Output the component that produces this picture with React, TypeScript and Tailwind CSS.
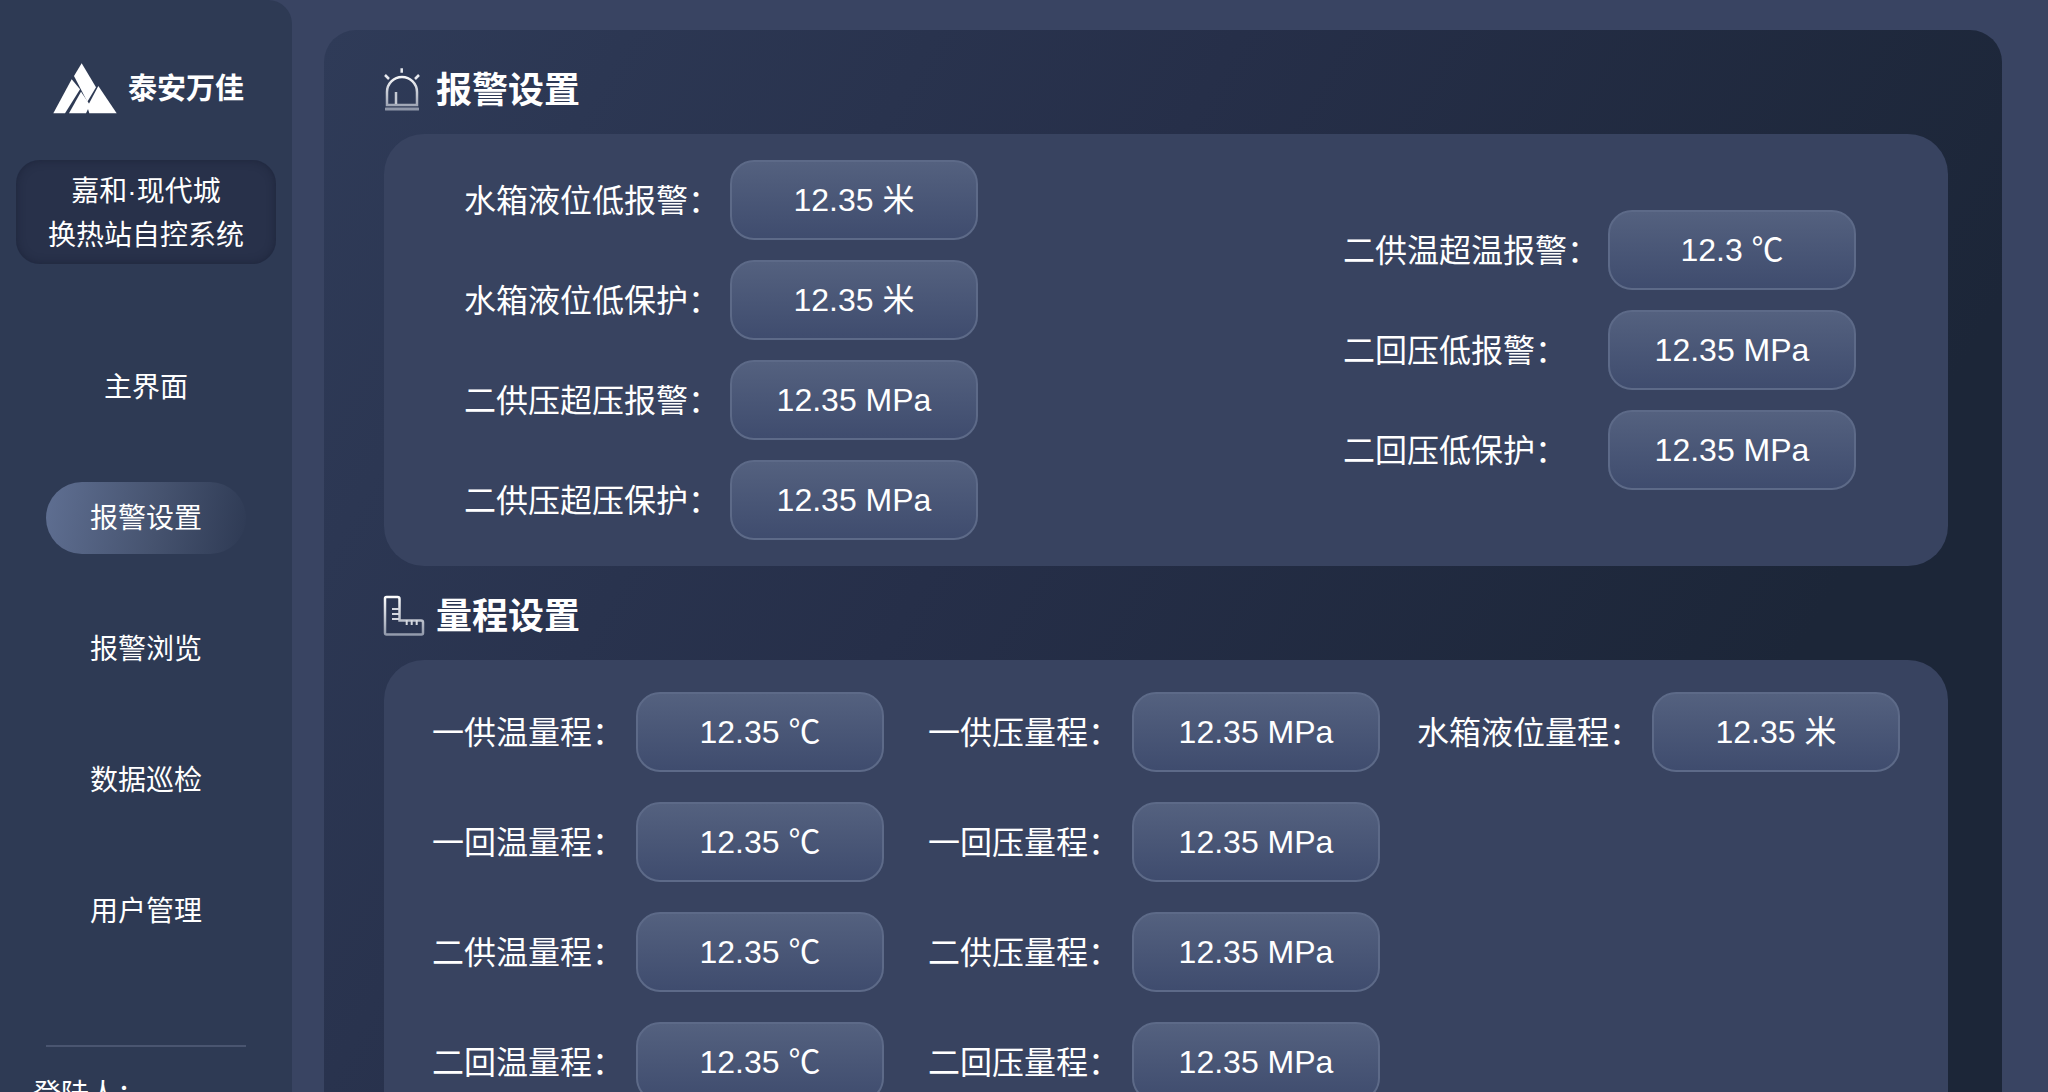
const font = "font-['Liberation_Sans','Noto_Sans_CJK_SC',sans-serif]";

const navItems = ["主界面", "报警设置", "报警浏览", "数据巡检", "用户管理"];

const alarmLeft = [
  { label: "水箱液位低报警：", value: "12.35 米" },
  { label: "水箱液位低保护：", value: "12.35 米" },
  { label: "二供压超压报警：", value: "12.35 MPa" },
  { label: "二供压超压保护：", value: "12.35 MPa" },
];

const alarmRight = [
  { label: "二供温超温报警：", value: "12.3 ℃" },
  { label: "二回压低报警：", value: "12.35 MPa" },
  { label: "二回压低保护：", value: "12.35 MPa" },
];

const rangeCol1 = [
  { label: "一供温量程：", value: "12.35 ℃" },
  { label: "一回温量程：", value: "12.35 ℃" },
  { label: "二供温量程：", value: "12.35 ℃" },
  { label: "二回温量程：", value: "12.35 ℃" },
];

const rangeCol2 = [
  { label: "一供压量程：", value: "12.35 MPa" },
  { label: "一回压量程：", value: "12.35 MPa" },
  { label: "二供压量程：", value: "12.35 MPa" },
  { label: "二回压量程：", value: "12.35 MPa" },
];

function Logo() {
  return (
    <svg width="80" height="65" viewBox="0 0 240 195" fill="#fff" className="shrink-0">
      <polygon points="110,25 153,97 127,140 87,63" />
      <polygon points="80,73 25,175 60,175 105,103" />
      <polygon points="108,110 135,150 123,175 72,175" />
      <polygon points="160,93 215,175 133,175 127,155" />
    </svg>
  );
}

function AlarmIcon() {
  return (
    <svg width="50" height="55" viewBox="0 0 50 55" fill="none" className="-ml-1 mb-[5px] shrink-0">
      <defs>
        <linearGradient id="alarmFill" gradientUnits="userSpaceOnUse" x1="0" y1="14" x2="0" y2="51">
          <stop offset="0" stopColor="#ffffff" />
          <stop offset="1" stopColor="#8f97a9" />
        </linearGradient>
      </defs>
      <path d="M7 45V32a15 15 0 0 1 30 0v13z" stroke="url(#alarmFill)" strokeWidth="2.500" />
      <path d="M16 44V32" stroke="#c5c9d3" strokeWidth="2.500" />
      <rect x="5" y="47.500" width="34" height="3" rx="0.500" fill="#8f97a9" />
      <path d="M21.700 8.300v4.400M5 15l4 4M39 15l-4 4" stroke="#e8eaef" strokeWidth="2.500" />
    </svg>
  );
}

function RulerIcon() {
  return (
    <svg width="50" height="50" viewBox="0 0 50 50" fill="none" className="-ml-1 mb-[2px] shrink-0">
      <defs>
        <linearGradient id="rulerFill" gradientUnits="userSpaceOnUse" x1="0" y1="6" x2="0" y2="46">
          <stop offset="0" stopColor="#ffffff" />
          <stop offset="1" stopColor="#8f97a9" />
        </linearGradient>
      </defs>
      <path
        d="M6.500 7h11a2 2 0 0 1 2 2v21.500H41a2 2 0 0 1 2 2V43a1.500 1.500 0 0 1-1.500 1.500H6.500A1.500 1.500 0 0 1 5 43V8.500A1.500 1.500 0 0 1 6.500 7z"
        stroke="url(#rulerFill)"
        strokeWidth="2.500"
      />
      <path d="M12 19h7M12 24h7M12 29h7M26.700 30v5M31.700 30v5M36.700 30v5" stroke="#d5d8df" strokeWidth="2" />
    </svg>
  );
}

function Field({ label, value, labelWidth }: { label: string; value: string; labelWidth: string }) {
  return (
    <div className="flex items-center">
      <div className={`${labelWidth} shrink-0 pt-[2px] text-[32px] leading-none whitespace-nowrap text-white`}>{label}</div>
      <div className="flex h-20 w-[248px] items-center justify-center rounded-[24px] border-2 border-[#5d6a88] bg-gradient-to-b from-[#54617f] to-[#3f4c6e] text-[32px] text-white">
        {value}
      </div>
    </div>
  );
}

function SectionTitle({ icon, title, className }: { icon: React.ReactNode; title: string; className: string }) {
  return (
    <div className={`flex h-11 items-center ${className}`}>
      <div className="flex w-[52px] items-center justify-start">{icon}</div>
      <h2 className="pt-[2px] text-[36px] font-bold leading-none text-white">{title}</h2>
    </div>
  );
}

export default function App() {
  return (
    <div className={`flex h-[1092px] w-[2048px] overflow-hidden bg-[#394462] ${font}`}>
      <aside className="flex h-[1200px] w-[292px] shrink-0 flex-col items-center rounded-tr-[24px] bg-[#2e3a54]">
        <div className="mt-[55px] flex h-[65px] w-full shrink-0 items-center gap-[3px] pl-[45px]">
          <Logo />
          <span className="pt-[4px] text-[29px] font-bold text-white">泰安万佳</span>
        </div>
        <div className="mt-10 flex h-[104px] w-[260px] shrink-0 flex-col items-center justify-center rounded-[24px] bg-[#28314a] pt-[3px] text-[28px] leading-[44px] text-white shadow-[inset_0_0_8px_rgba(20,26,44,0.5)]">
          <div>嘉和·现代城</div>
          <div>换热站自控系统</div>
        </div>
        <nav className="mt-[87px] flex w-[200px] shrink-0 flex-col gap-[59px]">
          {navItems.map((item, i) => (
            <div
              key={item}
              className={`flex h-[72px] items-center justify-center rounded-[36px] pt-[2px] text-[28px] text-white ${
                i === 1 ? "bg-[linear-gradient(100deg,#5f6f92_0%,#46536f_55%,#2e3a54_100%)]" : ""
              }`}
            >
              {item}
            </div>
          ))}
        </nav>
        <div className="mt-[98px] h-0.5 w-[200px] shrink-0 bg-[#4a5570]" />
        <div className="mt-[28px] w-full shrink-0 pl-[33px] text-[28px] leading-[40px] text-white">登陆人：</div>
      </aside>

      <main className="ml-8 mt-[30px] mr-[46px] flex-1 rounded-t-[32px] bg-[linear-gradient(120deg,#2f3b58_0%,#262f49_40%,#1c2638_80%)] pl-[60px] pr-[54px] pt-[38px]">
        <SectionTitle icon={<AlarmIcon />} title="报警设置" className="mb-[22px]" />
        <section className="flex h-[432px] items-center justify-between rounded-[40px] bg-[#384360] pl-[80px] pr-[92px]">
          <div className="flex flex-col gap-5">
            {alarmLeft.map((f) => (
              <Field key={f.label} {...f} labelWidth="w-[266px]" />
            ))}
          </div>
          <div className="flex flex-col gap-5">
            {alarmRight.map((f) => (
              <Field key={f.label} {...f} labelWidth="w-[265px]" />
            ))}
          </div>
        </section>

        <SectionTitle icon={<RulerIcon />} title="量程设置" className="mt-7 mb-[22px]" />
        <section className="flex h-[500px] gap-[44px] rounded-[40px] bg-[#384360] pl-12 pt-8">
          <div className="flex flex-col gap-[30px]">
            {rangeCol1.map((f) => (
              <Field key={f.label} {...f} labelWidth="w-[204px]" />
            ))}
          </div>
          <div className="flex flex-col gap-[30px]">
            {rangeCol2.map((f) => (
              <Field key={f.label} {...f} labelWidth="w-[204px]" />
            ))}
          </div>
          <div className="-ml-[7px]">
            <Field label="水箱液位量程：" value="12.35 米" labelWidth="w-[235px]" />
          </div>
        </section>
      </main>
    </div>
  );
}
